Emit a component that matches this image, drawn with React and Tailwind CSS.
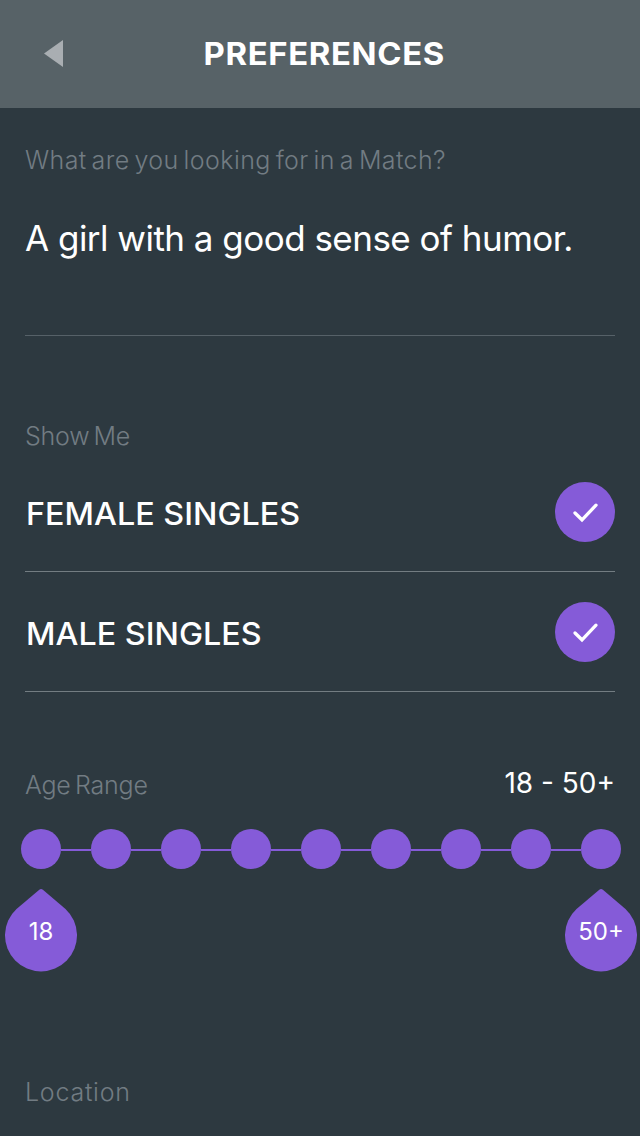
const AGE_STOPS = [18, 22, 26, 30, 34, 38, 42, 46, 50];

function Label({ children, className = "tracking-[-0.25px]" }) {
  return (
    <span
      className={`block whitespace-nowrap font-['Inter',sans-serif] font-light text-[25px] leading-8 text-[#727c83] [word-spacing:-2.5px] ${className}`}
    >
      {children}
    </span>
  );
}

function CheckBadge() {
  return (
    <span className="flex size-[60px] items-center justify-center rounded-full bg-[#855bd8]">
      <svg width="60" height="60" viewBox="0 0 60 60" fill="none">
        <path
          d="M20 31 L27 37.8 L41 23.2"
          stroke="white"
          strokeWidth="3.3"
          strokeLinecap="round"
          strokeLinejoin="miter"
        />
      </svg>
    </span>
  );
}

function OptionRow({ children }) {
  return (
    <button className="flex h-[120px] w-full items-center justify-between border-b border-[#737d82] pt-px text-left text-white">
      <span className="origin-left scale-x-[1.042] whitespace-nowrap pt-1 pl-px font-['Inter',sans-serif] text-[31px] leading-10 font-medium">
        {children}
      </span>
      <CheckBadge />
    </button>
  );
}

function Pin({ children }) {
  return (
    <div className="grid h-[83px] w-[72px] place-items-center">
      <svg
        className="col-start-1 row-start-1"
        width="72"
        height="83"
        viewBox="0 0 72 83"
        fill="#855bd8"
      >
        <path d="M34.3 0.7 Q36 -0.7 37.9 0.7 L60.5 20 A36 36 0 1 1 11.5 20 Z" />
      </svg>
      <span className="col-start-1 row-start-1 pt-0.5 font-['Inter',sans-serif] text-[24px] leading-8 text-white">
        {children}
      </span>
    </div>
  );
}

export default function App() {
  return (
    <div className="flex h-[1136px] w-[640px] flex-col overflow-hidden bg-[#2d3940]">
      <header className="grid h-[108px] shrink-0 grid-cols-[100px_1fr_100px] items-center bg-[#576267]">
        <button aria-label="Back" className="pb-0.5 pl-11">
          <svg width="19" height="27" viewBox="0 0 19 27" fill="#a9aeb2">
            <path d="M0 13.5 L19 0 V27 Z" />
          </svg>
        </button>
        <h1 className="scale-x-[1.06] pl-2 text-center font-['Inter',sans-serif] text-[31px] leading-10 font-bold tracking-[0.6px] text-white">
          PREFERENCES
        </h1>
      </header>

      <main className="flex flex-col">
        <section className="mx-[25px] h-[228px] border-b border-[#566168] pt-9">
          <Label className="tracking-[0.4px]">What are you looking for in a Match?</Label>
          <p className="pt-[38px] font-['Inter',sans-serif] text-[35px] leading-12 tracking-[-0.52px] whitespace-nowrap text-white">
            A girl with a good sense of humor.
          </p>
        </section>

        <section className="mx-[25px] pt-[84px]">
          <Label>Show Me</Label>
          <div className="flex flex-col">
            <OptionRow>FEMALE SINGLES</OptionRow>
            <OptionRow>MALE SINGLES</OptionRow>
          </div>
        </section>

        <section className="pt-[73px]">
          <div className="mx-[25px] flex h-10 justify-between">
            <Label className="pt-1 tracking-[-0.2px]">Age Range</Label>
            <span className="font-['Inter',sans-serif] text-[28px] leading-9 text-white">
              18 - 50+
            </span>
          </div>
          <div className="mt-6 ml-[21px] flex h-10 w-[600px] items-center">
            {AGE_STOPS.map((age, i) => (
              <div key={age} className="flex items-center">
                {i > 0 && <span className="mt-0.5 h-0.5 w-[30px] bg-[#855bd8]" />}
                <span className="size-10 rounded-full bg-[#855bd8]" />
              </div>
            ))}
          </div>
          <div className="mt-5 flex justify-between pr-[3px] pl-[5px]">
            <Pin>18</Pin>
            <Pin>50+</Pin>
          </div>
        </section>

        <section className="mx-[25px] pt-[104px]">
          <Label className="tracking-[0.75px]">Location</Label>
        </section>
      </main>
    </div>
  );
}
